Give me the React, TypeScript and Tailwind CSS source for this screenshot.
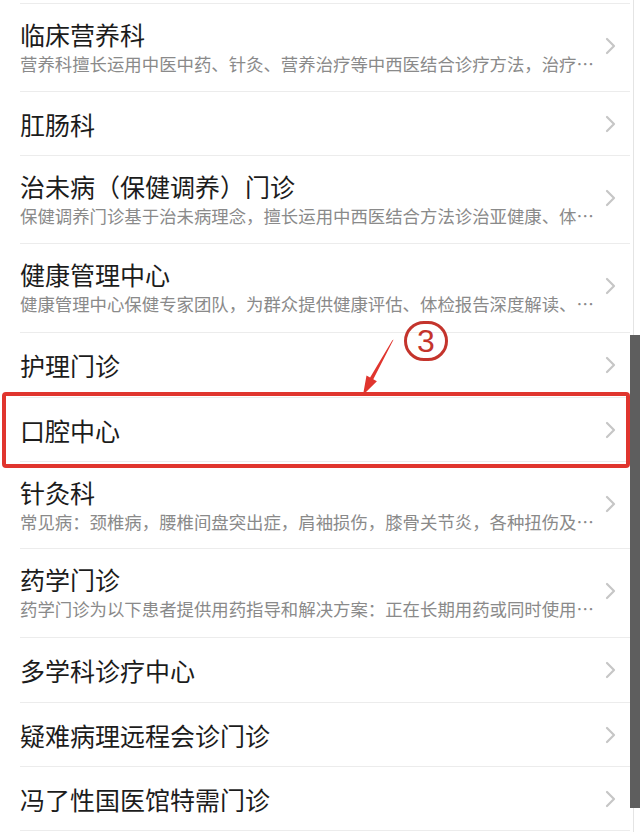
import React from "react";

type Item = { title: string; sub?: string; h: string };

const items: Item[] = [
  { title: "临床营养科", sub: "营养科擅长运用中医中药、针灸、营养治疗等中西医结合诊疗方法，治疗…", h: "h-[88px]" },
  { title: "肛肠科", h: "h-[64px]" },
  { title: "治未病（保健调养）门诊", sub: "保健调养门诊基于治未病理念，擅长运用中西医结合方法诊治亚健康、体…", h: "h-[88px]" },
  { title: "健康管理中心", sub: "健康管理中心保健专家团队，为群众提供健康评估、体检报告深度解读、…", h: "h-[89px]" },
  { title: "护理门诊", h: "h-[65px]" },
  { title: "口腔中心", h: "h-[64px]" },
  { title: "针灸科", sub: "常见病：颈椎病，腰椎间盘突出症，肩袖损伤，膝骨关节炎，各种扭伤及…", h: "h-[87px]" },
  { title: "药学门诊", sub: "药学门诊为以下患者提供用药指导和解决方案：正在长期用药或同时使用…", h: "h-[89px]" },
  { title: "多学科诊疗中心", h: "h-[65px]" },
  { title: "疑难病理远程会诊门诊", h: "h-[64px]" },
  { title: "冯了性国医馆特需门诊", h: "h-[64px]" },
];

function Chevron() {
  return (
    <svg width="11" height="18" viewBox="0 0 11 18" className="shrink-0">
      <path d="M2 2 L9 9 L2 16" fill="none" stroke="#c6c6c6" strokeWidth="2.2" strokeLinecap="round" strokeLinejoin="round" />
    </svg>
  );
}

export default function App() {
  return (
    <div
      className="relative w-[640px] h-[832px] overflow-hidden bg-white"
      style={{ fontFamily: '"Noto Sans CJK SC", "Noto Sans", sans-serif' }}
    >
      <div className="pt-[3px] pl-[20px] pr-[10px]">
        <div className="border-t border-[#ececec]">
          {items.map((it) => (
            <div
              key={it.title}
              className={`${it.h} flex border-b border-[#ececec] pr-[14px] ${it.sub ? "items-start" : "items-center"}`}
            >
              <div className={`flex-1 min-w-0 ${it.sub ? "pt-[15px]" : ""}`}>
                <div className="text-[25px] leading-[30px] text-[#1c1c1c] whitespace-nowrap">{it.title}</div>
                {it.sub && (
                  <div className="mt-[3px] text-[17.4px] leading-[24px] text-[#8a8a8a] whitespace-nowrap">{it.sub}</div>
                )}
              </div>
              <div className={`flex items-center ${it.sub ? "h-[88px] -mt-[2px]" : ""}`}>
                <Chevron />
              </div>
            </div>
          ))}
        </div>
      </div>

      {/* page edge line */}
      <div className="absolute top-0 right-[6px] w-px h-full bg-[#e4e4e4]" />
      {/* scrollbar */}
      <div className="absolute top-[335px] right-0 w-[10px] h-[473px] bg-[#5e5e5e]" />

      {/* red highlight box */}
      <div className="absolute left-[2px] top-[392px] w-[628px] h-[76px] border-[4px] border-[#e0352e] rounded-[4px]" />

      {/* circled number */}
      <div className="absolute left-[404px] top-[321px] w-[44px] h-[40px] rounded-full border-[3px] border-[#c4342c] flex items-center justify-center">
        <span
          className="text-[32px] leading-none text-[#c4342c]"
          style={{ fontFamily: '"Liberation Sans", sans-serif' }}
        >
          3
        </span>
      </div>

      {/* arrow */}
      <svg className="absolute left-0 top-0" width="640" height="832" viewBox="0 0 640 832">
        <polygon
          points="393.6,339.6 392.2,340.4 370.1,377.4 366.5,375.4 363,395 376.9,381.2 373.3,379.2"
          fill="#e0352e"
        />
      </svg>
    </div>
  );
}
